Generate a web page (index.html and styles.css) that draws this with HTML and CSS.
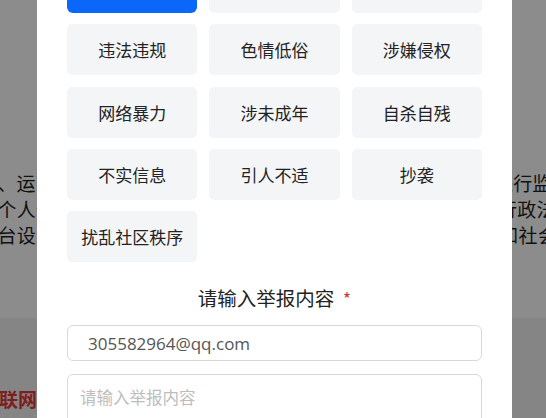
FILE: index.html
```html
<!DOCTYPE html>
<html lang="zh-CN">
<head>
<meta charset="utf-8">
<title>举报</title>
<link rel="stylesheet" href="styles.css">
</head>
<body>
<div class="page">
  <div class="col">
    <div class="hero"></div>
    <p class="para">
      <span class="ln ln-a">、运营者应当落实其主体责任，依法依规积极配合有关部门进行监管职责</span>
      <span class="ln ln-b">个人信息保护等方面的法律法规，不得违反国家有关法律、行政法规的规定</span>
      <span class="ln ln-c">台设置的管理规则，维护良好网络生态秩序，遵守公共秩序和社会公德等</span>
    </p>
  </div>
  <footer class="foot">
    <div class="foot-col">
      <div class="foot-title">联网违法和不良信息举报中心</div>
      <div class="foot-sub">710 举报电话 12377</div>
    </div>
  </footer>
</div>

<div class="mask"></div>

<div class="modal">
  <div class="types">
    <button class="type active">全部</button>
    <button class="type">政治敏感</button>
    <button class="type">垃圾广告</button>
    <button class="type">违法违规</button>
    <button class="type">色情低俗</button>
    <button class="type">涉嫌侵权</button>
    <button class="type">网络暴力</button>
    <button class="type">涉未成年</button>
    <button class="type">自杀自残</button>
    <button class="type">不实信息</button>
    <button class="type">引人不适</button>
    <button class="type">抄袭</button>
    <button class="type">扰乱社区秩序</button>
  </div>
  <div class="label">请输入举报内容 <span class="req">*</span></div>
  <input class="field" type="text" value="305582964@qq.com">
  <textarea class="area" placeholder="请输入举报内容"></textarea>
</div>
</body>
</html>
```

FILE: styles.css
```css
html, body {
  margin: 0;
  padding: 0;
  width: 546px;
  height: 418px;
  overflow: hidden;
  background: #fff;
}
body {
  font-family: "Noto Sans CJK SC", "Noto Sans", sans-serif;
  color: #222;
}
.page {
  display: flex;
  flex-direction: column;
  height: 418px;
}
.col {
  display: flex;
  flex-direction: column;
  align-self: center;
  width: 551px;
  flex: 0 0 auto;
}
.hero {
  height: 170px;
}
.para {
  margin: 0;
  display: flex;
  flex-direction: column;
  font-size: 19px;
  line-height: 26px;
  color: #1e1e1e;
}
.ln {
  white-space: nowrap;
}
.ln-a {
  letter-spacing: 0.1px;
}
.ln-b {
  letter-spacing: 0.25px;
}
.ln-c {
  letter-spacing: 0.3px;
}
.foot {
  margin-top: 70px;
  flex: 1;
  background: #f2f2f2;
  display: flex;
  justify-content: center;
}
.foot-col {
  width: 548px;
  flex: 0 0 auto;
  padding-top: 69px;
}
.foot-title {
  font-size: 19px;
  font-weight: 700;
  line-height: 24px;
  color: #e3383a;
  white-space: nowrap;
}
.foot-sub {
  font-size: 11px;
  line-height: 14px;
  color: #fafafa;
  letter-spacing: 3px;
  white-space: nowrap;
}
.mask {
  position: fixed;
  inset: 0;
  background: rgba(0, 0, 0, 0.45);
}
.modal {
  position: absolute;
  left: 37px;
  top: -60px;
  width: 475px;
  height: 520px;
  background: #fff;
  border-radius: 10px;
  box-sizing: border-box;
  padding: 22px 30px 0;
  display: flex;
  flex-direction: column;
}
.types {
  display: grid;
  grid-template-columns: repeat(3, 1fr);
  column-gap: 12px;
  row-gap: 11.3px;
}
.type {
  height: 51px;
  border: none;
  border-radius: 5px;
  background: #f4f5f7;
  color: #222;
  font-family: "Noto Sans CJK SC", sans-serif;
  font-size: 17px;
  padding: 0;
  white-space: nowrap;
}
.type.active {
  background: #0a67f8;
  color: #fff;
  border-radius: 6px;
}
.label {
  margin-top: 22px;
  text-align: center;
  font-size: 19.5px;
  line-height: 28px;
  color: #222;
}
.req {
  color: #cf3b3b;
  font-size: 18px;
  margin-left: 4px;
}
.field {
  margin-top: 13px;
  height: 36px;
  box-sizing: border-box;
  border: 1px solid #d9d9d9;
  border-radius: 6px;
  padding: 0 20px;
  font-family: "Open Sans", sans-serif;
  font-size: 17px;
  color: #555;
  outline: none;
}
.area {
  margin-top: 13px;
  height: 80px;
  box-sizing: border-box;
  border: 1px solid #d9d9d9;
  border-radius: 6px;
  padding: 11px 12px;
  font-family: "Noto Sans CJK SC", sans-serif;
  font-size: 16.5px;
  line-height: 22px;
  resize: none;
  outline: none;
}
.area::placeholder {
  color: #bdbdbd;
}
```
